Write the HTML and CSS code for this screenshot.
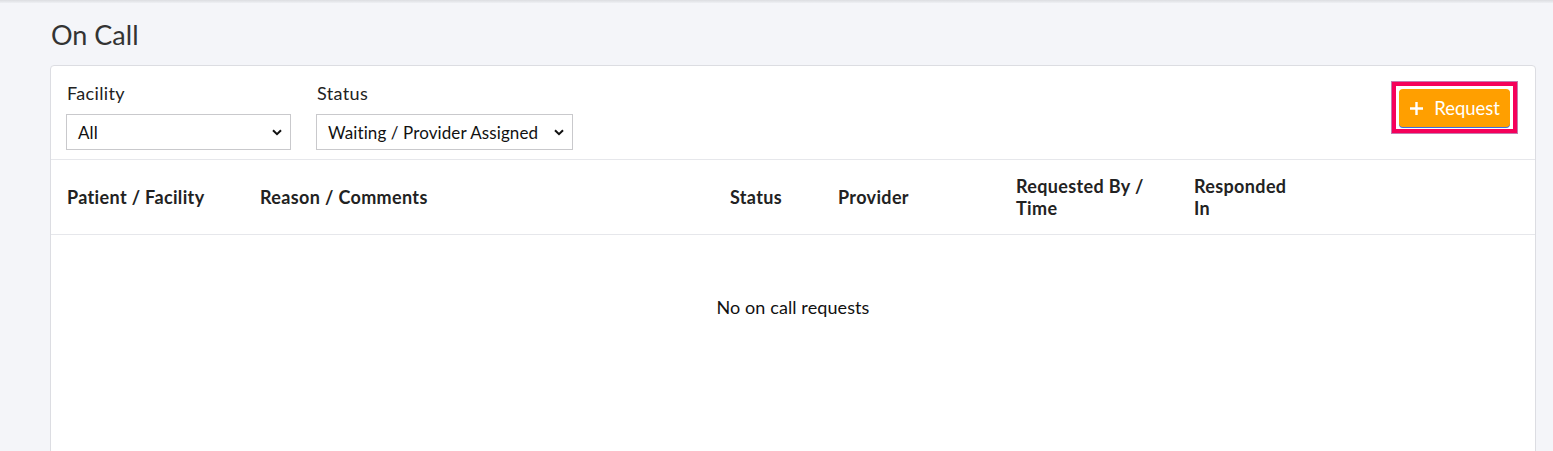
FILE: index.html
```html
<!DOCTYPE html>
<html lang="en">
<head>
<meta charset="utf-8">
<title>On Call</title>
<link rel="stylesheet" href="styles.css">
</head>
<body>
<div class="topbar"></div>
<main class="page">
  <h1 class="title">On Call</h1>
  <section class="card">
    <div class="filters">
      <div class="field">
        <label class="label">Facility</label>
        <div class="select select-facility" role="combobox">
          <span>All</span>
          <svg class="chev" width="10" height="7" viewBox="0 0 10 7"><path d="M1 1.2 L5 5.2 L9 1.2" fill="none" stroke="#111" stroke-width="2"/></svg>
        </div>
      </div>
      <div class="field">
        <label class="label">Status</label>
        <div class="select select-status" role="combobox">
          <span>Waiting / Provider Assigned</span>
          <svg class="chev" width="10" height="7" viewBox="0 0 10 7"><path d="M1 1.2 L5 5.2 L9 1.2" fill="none" stroke="#111" stroke-width="2"/></svg>
        </div>
      </div>
      <div class="spacer"></div>
      <div class="focus-ring">
        <button class="btn-request">
          <svg width="13" height="13" viewBox="0 0 13 13"><path d="M6.5 0 V13 M0 6.5 H13" stroke="#fff" stroke-width="2.4"/></svg>
          <span>Request</span>
        </button>
      </div>
    </div>
    <div class="thead">
      <div class="th">Patient / Facility</div>
      <div class="th">Reason / Comments</div>
      <div class="th">Status</div>
      <div class="th">Provider</div>
      <div class="th">Requested By /<br>Time</div>
      <div class="th">Responded<br>In</div>
      <div class="th"></div>
    </div>
    <div class="empty">No on call requests</div>
  </section>
</main>
</body>
</html>
```
FILE: styles.css
```css
* { box-sizing: border-box; }
html, body {
  margin: 0;
  padding: 0;
  background: #f4f5f9;
  font-family: Lato, "Open Sans", sans-serif;
  color: #222;
  overflow: hidden;
}
.topbar {
  height: 3px;
  background: linear-gradient(#dcdde1, #eef0f4);
}
.page {
  padding: 0 17px 0 50px;
}
.title {
  margin: 16px 0 0 1px;
  font-size: 27px;
  font-weight: 400;
  line-height: 32px;
  color: #333;
}
.card {
  margin-top: 14px;
  background: #fff;
  border: 1px solid #dcdde2;
  border-radius: 4px;
  min-height: 420px;
}
.filters {
  display: flex;
  align-items: flex-start;
  gap: 25px;
  padding: 16px 18px 9px 15px;
  border-bottom: 1px solid #e6e7eb;
}
.field {
  display: flex;
  flex-direction: column;
}
.label {
  font-size: 18px;
  letter-spacing: 0.35px;
  line-height: 22px;
  margin: 0 0 10px 1px;
  color: #222;
}
.select {
  height: 36px;
  display: flex;
  align-items: center;
  justify-content: space-between;
  border: 1px solid #c9c9cc;
  padding: 0 8px 0 11px;
  font-size: 17px;
  letter-spacing: 0.1px;
  color: #111;
  background: #fff;
}
.select-facility { width: 225px; }
.select-status { width: 257px; }
.chev { flex: none; margin-top: 1px; }
.spacer { flex: 1; }
.focus-ring {
  border: 4px solid #f5005a;
  outline: 1px solid #c47ab0;
  padding: 3px 3px 2px 3px;
  background: #fff;
}
.btn-request {
  display: flex;
  align-items: center;
  gap: 11px;
  height: 38px;
  padding: 0 10px 0 11px;
  background: #ff9f00;
  border: 0;
  border-radius: 4px;
  color: #fff;
  font-family: Lato, sans-serif;
  font-size: 18.5px;
  box-shadow: 0 1px 0 #3f6fe8;
}
.thead {
  display: grid;
  grid-template-columns: 193px 470px 108px 178px 178px 124px 1fr;
  align-items: center;
  border-bottom: 1px solid #e6e7eb;
  padding: 14px 0 15px;
  min-height: 75px;
}
.th {
  padding: 0 16px;
  font-weight: 700;
  font-size: 18px;
  letter-spacing: 0.35px;
  line-height: 22px;
  color: #222;
}
.empty {
  text-align: center;
  font-size: 18px;
  letter-spacing: 0.1px;
  color: #111;
  padding: 61px 0 100px;
}
```
